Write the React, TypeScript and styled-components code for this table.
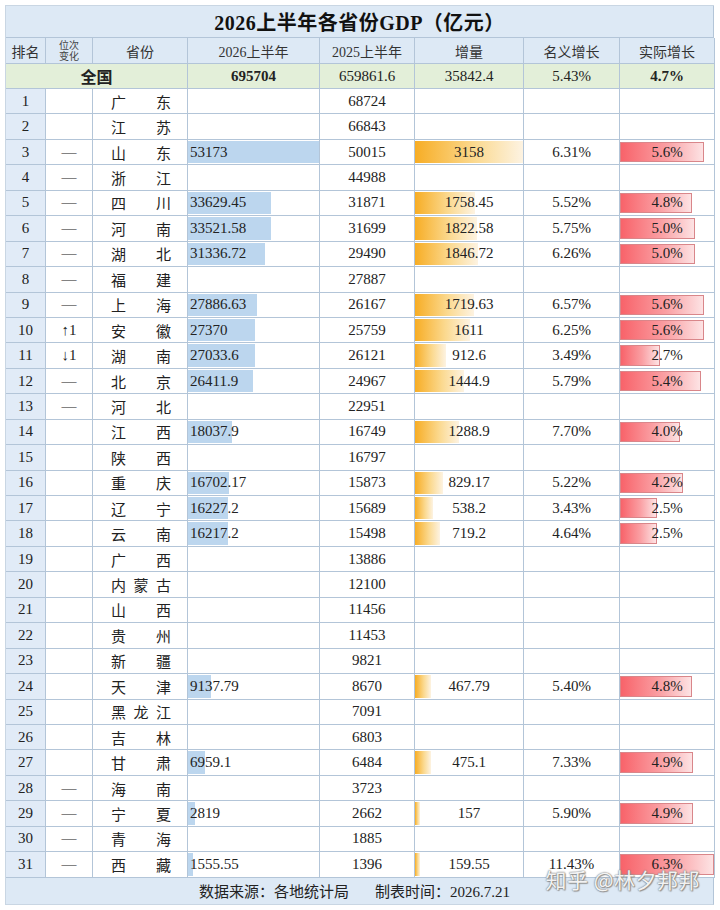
import { createGlobalStyle, styled } from 'styled-components';

const GlobalStyle = createGlobalStyle`
  html, body {
    margin: 0;
    padding: 0;
    background: #ffffff;
  }
  body {
    font-family: "Liberation Serif", "Noto Sans CJK SC", serif;
    color: #222;
  }
`;

const COLS = '40px 47px 95px 132px 95px 109px 96px 95px';
const LINE = '#b3c5d8';

type Item = {
  rank: number;
  move?: string;
  name: string;
  gdp26?: string;
  gdp25: string;
  inc?: string;
  nominal?: string;
  real?: string;
};

const rows: Item[] = [
  { rank: 1, name: '广东', gdp25: '68724' },
  { rank: 2, name: '江苏', gdp25: '66843' },
  { rank: 3, move: '—', name: '山东', gdp26: '53173', gdp25: '50015', inc: '3158', nominal: '6.31%', real: '5.6%' },
  { rank: 4, move: '—', name: '浙江', gdp25: '44988' },
  { rank: 5, move: '—', name: '四川', gdp26: '33629.45', gdp25: '31871', inc: '1758.45', nominal: '5.52%', real: '4.8%' },
  { rank: 6, move: '—', name: '河南', gdp26: '33521.58', gdp25: '31699', inc: '1822.58', nominal: '5.75%', real: '5.0%' },
  { rank: 7, move: '—', name: '湖北', gdp26: '31336.72', gdp25: '29490', inc: '1846.72', nominal: '6.26%', real: '5.0%' },
  { rank: 8, move: '—', name: '福建', gdp25: '27887' },
  { rank: 9, move: '—', name: '上海', gdp26: '27886.63', gdp25: '26167', inc: '1719.63', nominal: '6.57%', real: '5.6%' },
  { rank: 10, move: '↑1', name: '安徽', gdp26: '27370', gdp25: '25759', inc: '1611', nominal: '6.25%', real: '5.6%' },
  { rank: 11, move: '↓1', name: '湖南', gdp26: '27033.6', gdp25: '26121', inc: '912.6', nominal: '3.49%', real: '2.7%' },
  { rank: 12, move: '—', name: '北京', gdp26: '26411.9', gdp25: '24967', inc: '1444.9', nominal: '5.79%', real: '5.4%' },
  { rank: 13, move: '—', name: '河北', gdp25: '22951' },
  { rank: 14, name: '江西', gdp26: '18037.9', gdp25: '16749', inc: '1288.9', nominal: '7.70%', real: '4.0%' },
  { rank: 15, name: '陕西', gdp25: '16797' },
  { rank: 16, name: '重庆', gdp26: '16702.17', gdp25: '15873', inc: '829.17', nominal: '5.22%', real: '4.2%' },
  { rank: 17, name: '辽宁', gdp26: '16227.2', gdp25: '15689', inc: '538.2', nominal: '3.43%', real: '2.5%' },
  { rank: 18, name: '云南', gdp26: '16217.2', gdp25: '15498', inc: '719.2', nominal: '4.64%', real: '2.5%' },
  { rank: 19, name: '广西', gdp25: '13886' },
  { rank: 20, name: '内蒙古', gdp25: '12100' },
  { rank: 21, name: '山西', gdp25: '11456' },
  { rank: 22, name: '贵州', gdp25: '11453' },
  { rank: 23, name: '新疆', gdp25: '9821' },
  { rank: 24, name: '天津', gdp26: '9137.79', gdp25: '8670', inc: '467.79', nominal: '5.40%', real: '4.8%' },
  { rank: 25, name: '黑龙江', gdp25: '7091' },
  { rank: 26, name: '吉林', gdp25: '6803' },
  { rank: 27, name: '甘肃', gdp26: '6959.1', gdp25: '6484', inc: '475.1', nominal: '7.33%', real: '4.9%' },
  { rank: 28, move: '—', name: '海南', gdp25: '3723' },
  { rank: 29, move: '—', name: '宁夏', gdp26: '2819', gdp25: '2662', inc: '157', nominal: '5.90%', real: '4.9%' },
  { rank: 30, move: '—', name: '青海', gdp25: '1885' },
  { rank: 31, move: '—', name: '西藏', gdp26: '1555.55', gdp25: '1396', inc: '159.55', nominal: '11.43%', real: '6.3%' },
];

const MAX_GDP = 53173;
const MAX_INC = 3158;
const MAX_REAL = 6.3;

const Page = styled.div`
  padding: 5px 6px 6px 5px;
`;

const Table = styled.div`
  position: relative;
  width: 709px;
  border-top: 1px solid #c9d6e3;
  border-left: 1px solid #c9d6e3;
  box-sizing: border-box;
`;

const Title = styled.div`
  height: 32px;
  display: flex;
  align-items: center;
  justify-content: center;
  background: #dde9f5;
  border-bottom: 1px solid ${LINE};
  border-right: 1px solid ${LINE};
  box-sizing: border-box;
  font-size: 20px;
  font-weight: bold;
  color: #111;
  letter-spacing: 0.5px;
`;

const Row = styled.div<{ $h: string; $bg?: string }>`
  display: grid;
  grid-template-columns: ${COLS};
  height: ${({ $h }) => $h};
  background: ${({ $bg }) => $bg || '#ffffff'};
`;

const Cell = styled.div<{ $align?: string; $bg?: string; $size?: number }>`
  position: relative;
  display: flex;
  align-items: center;
  justify-content: ${({ $align }) => $align || 'center'};
  border-right: 1px solid ${LINE};
  border-bottom: 1px solid ${LINE};
  box-sizing: border-box;
  background: ${({ $bg }) => $bg || 'transparent'};
  font-size: ${({ $size }) => $size || 15}px;
  overflow: hidden;
  white-space: nowrap;
`;

const HeadCell = styled(Cell)`
  color: #333;
  font-size: 14px;
`;

const SmallHead = styled(HeadCell)`
  flex-direction: column;
  font-size: 10px;
  line-height: 11px;
  color: #444;
`;

const TotalLabel = styled(Cell)`
  grid-column: span 3;
  font-weight: bold;
  font-size: 16px;
`;

const Bold = styled(Cell)`
  font-weight: bold;
`;

const Name = styled(Cell)`
  justify-content: space-between;
  padding: 0 16px 0 18px;
  font-size: 15px;
  color: #222;
`;

const Fill = styled.span<{ $kind: 'blue' | 'orange' | 'red' }>`
  position: absolute;
  left: 0;
  top: ${({ $kind }) => ($kind === 'red' ? 2 : 1)}px;
  bottom: ${({ $kind }) => ($kind === 'red' ? 2 : 1)}px;
  box-sizing: border-box;
  background: ${({ $kind }) =>
    $kind === 'blue'
      ? '#bcd6ee'
      : $kind === 'orange'
      ? 'linear-gradient(to right, #f7ad25, #fbd98f 55%, #fdf3e2)'
      : 'linear-gradient(to right, #f8636a, #fa9fa3 55%, #fde3e4)'};
  border: ${({ $kind }) => ($kind === 'red' ? '1px solid #d9868a' : 'none')};
`;

const Value = styled.span<{ $pad?: number }>`
  position: relative;
  padding-left: ${({ $pad }) => $pad || 0}px;
`;

const Footer = styled.div`
  height: 27px;
  display: flex;
  align-items: center;
  justify-content: center;
  gap: 26px;
  padding-right: 10px;
  background: #dde9f5;
  border-right: 1px solid ${LINE};
  border-bottom: 1px solid #c9d6e3;
  box-sizing: border-box;
  font-size: 15px;
  color: #222;
`;

const Watermark = styled.div`
  position: absolute;
  right: 14px;
  bottom: 11px;
  font-family: "Noto Sans CJK SC", sans-serif;
  font-size: 21px;
  color: rgba(255, 255, 255, 0.92);
  text-shadow: 0 0 1px #777, 0 0 2px #888, 1px 1px 1px #999;
  letter-spacing: 0.5px;
  pointer-events: none;
`;

const pct = (v: number, max: number) => `${Math.max((v / max) * 100, 3.5)}%`;

const DataRow = ({ item }: { item: Item }) => (
  <Row $h="25.45px">
    <Cell $bg="#e1ebf7">{item.rank}</Cell>
    <Cell $size={15}>{item.move}</Cell>
    <Name>
      {item.name.split('').map((c, i) => (
        <span key={i}>{c}</span>
      ))}
    </Name>
    <Cell $align="flex-start">
      {item.gdp26 && (
        <>
          <Fill $kind="blue" style={{ width: pct(parseFloat(item.gdp26), MAX_GDP) }} />
          <Value $pad={2}>{item.gdp26}</Value>
        </>
      )}
    </Cell>
    <Cell>{item.gdp25}</Cell>
    <Cell>
      {item.inc && (
        <>
          <Fill $kind="orange" style={{ width: pct(parseFloat(item.inc), MAX_INC) }} />
          <Value>{item.inc}</Value>
        </>
      )}
    </Cell>
    <Cell>{item.nominal}</Cell>
    <Cell>
      {item.real && (
        <>
          <Fill $kind="red" style={{ width: pct(parseFloat(item.real), MAX_REAL) }} />
          <Value>{item.real}</Value>
        </>
      )}
    </Cell>
  </Row>
);

const App = () => {
  return (
    <Page>
      <GlobalStyle />
      <Table>
        <Title>2026上半年各省份GDP（亿元）</Title>

        <Row $h="26px" $bg="#dde9f5">
          <HeadCell $size={15}>排名</HeadCell>
          <SmallHead>
            <span>位次</span>
            <span>变化</span>
          </SmallHead>
          <HeadCell $size={15}>省份</HeadCell>
          <HeadCell>2026上半年</HeadCell>
          <HeadCell>2025上半年</HeadCell>
          <HeadCell>增量</HeadCell>
          <HeadCell>名义增长</HeadCell>
          <HeadCell>实际增长</HeadCell>
        </Row>

        <Row $h="25px" $bg="#e3efd9">
          <TotalLabel>全国</TotalLabel>
          <Bold>695704</Bold>
          <Cell>659861.6</Cell>
          <Cell>35842.4</Cell>
          <Cell>5.43%</Cell>
          <Bold>4.7%</Bold>
        </Row>

        {rows.map((item) => (
          <DataRow key={item.rank} item={item} />
        ))}

        <Footer>
          <span>数据来源：各地统计局</span>
          <span>制表时间：2026.7.21</span>
        </Footer>

        <Watermark>知乎 @林夕邦邦</Watermark>
      </Table>
    </Page>
  );
};

export default App;
